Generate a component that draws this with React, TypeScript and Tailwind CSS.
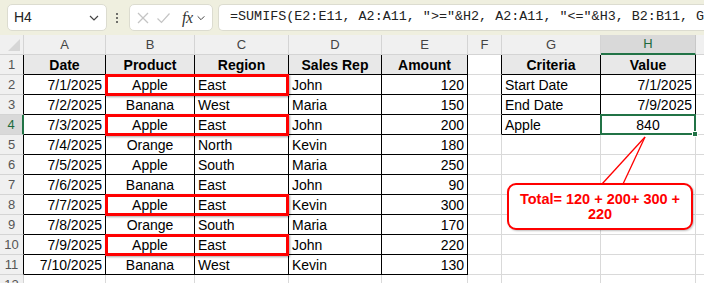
import React from 'react'

const COLS = [
  { key: '', w: 'w-[24px]' },
  { key: 'A', w: 'w-[82px]' },
  { key: 'B', w: 'w-[89px]' },
  { key: 'C', w: 'w-[94px]' },
  { key: 'D', w: 'w-[93px]' },
  { key: 'E', w: 'w-[86px]' },
  { key: 'F', w: 'w-[34px]' },
  { key: 'G', w: 'w-[99px]' },
  { key: 'H', w: 'w-[95px]' },
  { key: 'I', w: 'w-[40px]' },
]

// alignment per column: l = left, c = center, r = right
const ALIGN = ['c', 'r', 'c', 'l', 'l', 'r', 'l', 'l', 'r', 'l']

const DATA: string[][] = [
  ['Date', 'Product', 'Region', 'Sales Rep', 'Amount', '', 'Criteria', 'Value'],
  ['7/1/2025', 'Apple', 'East', 'John', '120', '', 'Start Date', '7/1/2025'],
  ['7/2/2025', 'Banana', 'West', 'Maria', '150', '', 'End Date', '7/9/2025'],
  ['7/3/2025', 'Apple', 'East', 'John', '200', '', 'Apple', '840'],
  ['7/4/2025', 'Orange', 'North', 'Kevin', '180'],
  ['7/5/2025', 'Apple', 'South', 'Maria', '250'],
  ['7/6/2025', 'Banana', 'East', 'John', '90'],
  ['7/7/2025', 'Apple', 'East', 'Kevin', '300'],
  ['7/8/2025', 'Orange', 'South', 'Maria', '170'],
  ['7/9/2025', 'Apple', 'East', 'John', '220'],
  ['7/10/2025', 'Banana', 'West', 'Kevin', '130'],
  [],
]

const HIGHLIGHT_ROWS = [2, 4, 8, 10]

function inTable(r: number, c: number) {
  if (r >= 1 && r <= 11 && c >= 1 && c <= 5) return true
  if (r >= 1 && r <= 4 && c >= 7 && c <= 8) return true
  return false
}

function ChevronDown({ size = 10 }: { size?: number }) {
  return (
    <svg width={size} height={size} viewBox="0 0 12 12" fill="none" stroke="#444" strokeWidth="1.2">
      <polyline points="2 4 6 8 10 4" />
    </svg>
  )
}

function TopBar() {
  return (
    <div className="h-[35px] bg-[#efefdf] flex items-center pl-[7px] shrink-0">
      {/* Name box */}
      <div className="w-[100px] h-[27px] bg-white border border-[#dcdcd0] rounded-[5px] flex items-center justify-between pl-[6px] pr-[6px]">
        <span className="text-[14px] text-[#222] font-['Liberation_Sans',sans-serif]">H4</span>
        <ChevronDown size={12} />
      </div>
      <div className="w-[4px] ml-[8px] flex flex-col items-center gap-[2px]">
        <span className="w-[2px] h-[2px] bg-[#444] rounded-full" />
        <span className="w-[2px] h-[2px] bg-[#444] rounded-full" />
        <span className="w-[2px] h-[2px] bg-[#444] rounded-full" />
      </div>
      {/* fx box */}
      <div className="ml-[10px] w-[84px] h-[27px] bg-white border border-[#dcdcd0] rounded-[5px] flex items-center pl-[6px] pr-[2px]">
        <svg width="14" height="14" viewBox="0 0 14 14" fill="none" stroke="#c4c4c4" strokeWidth="1.2">
          <line x1="2" y1="2" x2="12" y2="12" />
          <line x1="12" y1="2" x2="2" y2="12" />
        </svg>
        <svg className="ml-[6px]" width="15" height="14" viewBox="0 0 15 14" fill="none" stroke="#c4c4c4" strokeWidth="1.2">
          <polyline points="1.5 7.5 5.5 11.5 13.5 2.5" />
        </svg>
        <span className="ml-[11px] text-[16px] italic text-[#333] font-['Liberation_Serif',serif] leading-none tracking-[-0.5px]">fx</span>
        <span className="ml-[3px]"><ChevronDown size={10} /></span>
      </div>
      {/* Formula input */}
      <div className="ml-[5px] flex-1 h-[27px] bg-white border border-[#dcdcd0] rounded-l-[5px] border-r-0 flex items-center pl-[11px] overflow-hidden">
        <span className="whitespace-nowrap text-[13.4px] text-[#222] font-['Liberation_Mono',monospace]">
          =SUMIFS(E2:E11, A2:A11, "&gt;="&amp;H2, A2:A11, "&lt;="&amp;H3, B2:B11, G4)
        </span>
      </div>
    </div>
  )
}

function ColumnHeaders() {
  return (
    <div className="flex h-[20px] shrink-0">
      {COLS.map((col, c) => {
        if (c === 0) {
          return (
            <div key={c} className={`${col.w} h-[20px] shrink-0 bg-[#f0f0f0] border-r border-b border-r-[#d4d4d4] border-b-[#d4d4d4] flex items-end justify-end p-[3px]`}>
              <svg width="12" height="12" viewBox="0 0 12 12">
                <polygon points="12 0 12 12 0 12" fill="#d6d6d6" />
              </svg>
            </div>
          )
        }
        const selected = col.key === 'H'
        return (
          <div
            key={c}
            className={`${col.w} h-[20px] shrink-0 border-r flex items-center justify-center text-[13px] font-['Liberation_Sans',sans-serif] ${
              selected
                ? 'bg-[#d9d9d9] text-[#1e6b3d] border-b-2 border-b-[#217346] border-r-[#c8c8c8]'
                : 'bg-[#f0f0f0] text-[#444] border-b border-r-[#d4d4d4] border-b-[#d4d4d4]'
            }`}
          >
            {col.key}
          </div>
        )
      })}
    </div>
  )
}

function Cell({ r, c }: { r: number; c: number }) {
  const col = COLS[c]
  const text = DATA[r - 1]?.[c - 1] ?? ''
  const rightBlack = inTable(r, c) || inTable(r, c + 1)
  const bottomBlack = inTable(r, c) || inTable(r + 1, c)
  const isHeader = r === 1 && inTable(r, c)
  let align = ALIGN[c]
  if (r === 1) align = 'c'
  if (r === 4 && c === 8) align = 'c'
  const isSelected = r === 4 && c === 8

  return (
    <div
      className={`${col.w} h-[20px] shrink-0 relative border-r border-b flex items-center pt-[2px] whitespace-nowrap text-[14px] text-black font-['Liberation_Sans',sans-serif] ${
        rightBlack ? 'border-r-black' : 'border-r-[#d9d9d9]'
      } ${bottomBlack ? 'border-b-black' : 'border-b-[#d9d9d9]'} ${
        align === 'r' ? 'justify-end pr-[3px]' : align === 'c' ? 'justify-center' : 'justify-start pl-[3px]'
      } ${isHeader ? 'bg-[#e8e8e8] font-bold' : 'bg-white'}`}
    >
      {text}
      {c === 2 && HIGHLIGHT_ROWS.includes(r) && (
        <div className="absolute z-10 left-[-1px] top-[-1px] w-[184px] h-[22px] border-[3px] border-[#ff0000] shadow-[1px_1px_2px_rgba(0,0,0,0.35)] pointer-events-none" />
      )}
      {isSelected && (
        <div className="absolute z-10 left-[-1px] top-[-1px] right-[-1px] bottom-[-1px] border-2 border-[#217346] pointer-events-none">
          <div className="absolute right-[-4px] bottom-[-4px] w-[6px] h-[6px] bg-[#217346] border border-white" />
        </div>
      )}
    </div>
  )
}

function Row({ r }: { r: number }) {
  const selected = r === 4
  return (
    <div className="flex h-[20px] shrink-0">
      <div
        className={`w-[24px] h-[20px] shrink-0 border-b border-b-[#d4d4d4] flex items-center justify-center pt-[1px] text-[13px] font-['Liberation_Sans',sans-serif] ${
          selected
            ? 'bg-[#d9d9d9] text-[#1e6b3d] border-r-2 border-r-[#217346]'
            : `bg-[#f0f0f0] text-[#555] border-r ${inTable(r, 1) ? 'border-r-black' : 'border-r-[#d4d4d4]'}`
        }`}
      >
        {r}
      </div>
      {COLS.slice(1).map((_, i) => (
        <Cell key={i} r={r} c={i + 1} />
      ))}
    </div>
  )
}

function Callout() {
  return (
    <>
      <svg className="absolute z-20 left-[590px] top-[130px] pointer-events-none" width="70" height="60" viewBox="0 0 70 60">
        <polygon points="55 7 12 54 33 54" fill="white" />
        <line x1="55" y1="7" x2="12" y2="54" stroke="#ff0000" strokeWidth="1.3" />
        <line x1="55" y1="7" x2="33" y2="54" stroke="#ff0000" strokeWidth="1.3" />
      </svg>
      <div className="absolute z-20 left-[507px] top-[183px] w-[186px] h-[47px] bg-white border-[2.5px] border-[#ff0000] rounded-[9px] flex items-center justify-center text-center shadow-[1px_1px_2px_rgba(0,0,0,0.25)]">
        <div className="text-[14.5px] leading-[15px] font-bold text-[#ff0000] font-['Liberation_Sans',sans-serif]">
          Total= 120 + 200+ 300 +
          <br />
          220
        </div>
      </div>
    </>
  )
}

export default function App() {
  const rows = Array.from({ length: 12 }, (_, i) => i + 1)
  return (
    <div className="relative w-[704px] h-[283px] overflow-hidden bg-white flex flex-col">
      <TopBar />
      <ColumnHeaders />
      {rows.map((r) => (
        <Row key={r} r={r} />
      ))}
      <Callout />
    </div>
  )
}
